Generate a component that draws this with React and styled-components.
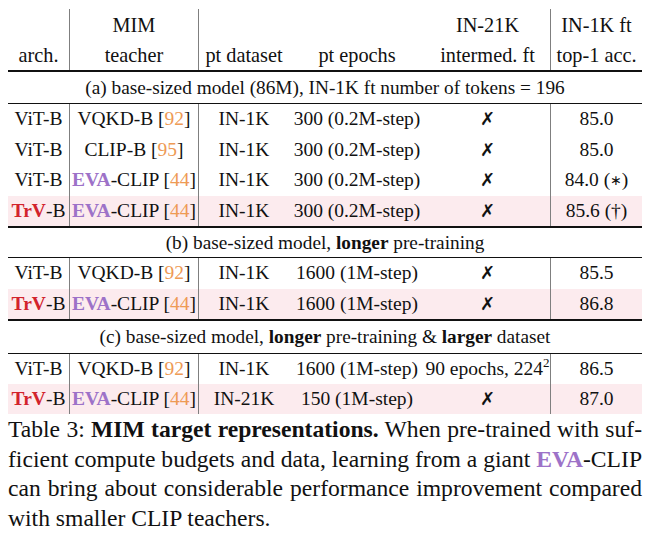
import React from 'react';
import styled, { createGlobalStyle } from 'styled-components';

const Global = createGlobalStyle`
  html, body { margin: 0; padding: 0; background: #fff; }
  body { font-family: "Liberation Serif", "Times New Roman", serif; color: #111; }
`;

const Page = styled.div`
  width: 651px;
  box-sizing: border-box;
  padding: 9px 9px 0 8px;
`;

const Table = styled.div`
  width: 634px;
  display: flex;
  flex-direction: column;
`;

const Row = styled.div`
  display: flex;
  height: ${p => p.$h}px;
  line-height: ${p => p.$h}px;
  font-size: ${p => (p.$head ? 20.3 : 19.5)}px;
  background: ${p => (p.$hl ? '#fcebee' : 'transparent')};
`;

const Cell = styled.div`
  box-sizing: border-box;
  flex: none;
  width: ${p => p.$w}px;
  text-align: center;
  white-space: nowrap;
  border-right: ${p => (p.$sep ? '1px solid #7f7f7f' : 'none')};
`;

const GroupRow = styled.div`
  height: ${p => p.$h}px;
  line-height: ${p => p.$h}px;
  font-size: 19.3px;
  text-align: center;
  white-space: nowrap;
`;

const Rule = styled.div`
  height: ${p => p.$t}px;
  background: #111;
`;

const Red = styled.b`
  color: #d2232c;
`;

const Purple = styled.b`
  color: #9d72c8;
`;

const Cite = styled.span`
  color: #ee9a55;
`;

const Cross = styled.span`
  font-family: "DejaVu Sans", sans-serif;
  font-weight: bold;
  font-size: 18px;
`;

const Ast = styled.span`
  font-family: "DejaVu Sans", sans-serif;
  font-size: 14px;
  vertical-align: 1px;
`;

const Sup = styled.sup`
  font-size: 13px;
  line-height: 0;
  vertical-align: 8px;
`;

const Caption = styled.div`
  width: 634px;
  margin-top: 1px;
  font-size: 23.6px;
  line-height: 29.5px;
`;

const CapLine = styled.div`
  text-align: ${p => (p.$last ? 'left' : 'justify')};
  text-align-last: ${p => (p.$last ? 'left' : 'justify')};
  white-space: nowrap;
`;

const W = [62, 129, 90, 136, 126, 91];
const SEP = [true, true, false, false, true, false];

const TableRow = ({ h, hl, head, cells }) => (
  <Row $h={h} $hl={hl} $head={head}>
    {cells.map((c, i) => (
      <Cell key={i} $w={W[i]} $sep={SEP[i]}>{c}</Cell>
    ))}
  </Row>
);

const X = () => <Cross>✗</Cross>;
const ViT = () => <>ViT-B</>;
const TrV = () => <><Red>TrV</Red>-B</>;
const Eva = () => <><Purple>EVA</Purple>-CLIP [<Cite>44</Cite>]</>;
const Vqkd = () => <>VQKD-B [<Cite>92</Cite>]</>;

export default function App() {
  return (
    <Page>
      <Global />
      <Table>
        <TableRow head h={32} cells={['', 'MIM', '', '', 'IN-21K', 'IN-1K ft']} />
        <TableRow head h={29} cells={['arch.', 'teacher', 'pt dataset', 'pt epochs', 'intermed. ft', 'top-1 acc.']} />
        <Rule $t={2} />
        <GroupRow $h={31}>(a) base-sized model (86M), IN-1K ft number of tokens = 196</GroupRow>
        <Rule $t={1} />
        <TableRow h={30.5} cells={[<ViT />, <Vqkd />, 'IN-1K', '300 (0.2M-step)', <X />, '85.0']} />
        <TableRow h={30.5} cells={[<ViT />, <>CLIP-B [<Cite>95</Cite>]</>, 'IN-1K', '300 (0.2M-step)', <X />, '85.0']} />
        <TableRow h={30.5} cells={[<ViT />, <Eva />, 'IN-1K', '300 (0.2M-step)', <X />, <>84.0 (<Ast>∗</Ast>)</>]} />
        <TableRow h={30.5} hl cells={[<TrV />, <Eva />, 'IN-1K', '300 (0.2M-step)', <X />, '85.6 (†)']} />
        <Rule $t={2} />
        <GroupRow $h={29}>(b) base-sized model, <b>longer</b> pre-training</GroupRow>
        <Rule $t={1} />
        <TableRow h={30.5} cells={[<ViT />, <Vqkd />, 'IN-1K', '1600 (1M-step)', <X />, '85.5']} />
        <TableRow h={30.5} hl cells={[<TrV />, <Eva />, 'IN-1K', '1600 (1M-step)', <X />, '86.8']} />
        <Rule $t={2} />
        <GroupRow $h={32}>(c) base-sized model, <b>longer</b> pre-training &amp; <b>larger</b> dataset</GroupRow>
        <Rule $t={1} />
        <TableRow h={30} cells={[<ViT />, <Vqkd />, 'IN-1K', '1600 (1M-step)', <>90 epochs, 224<Sup>2</Sup></>, '86.5']} />
        <TableRow h={30} hl cells={[<TrV />, <Eva />, 'IN-21K', '150 (1M-step)', <X />, '87.0']} />
      </Table>
      <Caption>
        <CapLine>Table 3: <b>MIM target representations.</b> When pre-trained with suf-</CapLine>
        <CapLine>ficient compute budgets and data, learning from a giant <Purple>EVA</Purple>-CLIP</CapLine>
        <CapLine>can bring about considerable performance improvement compared</CapLine>
        <CapLine $last>with smaller CLIP teachers.</CapLine>
      </Caption>
    </Page>
  );
}
